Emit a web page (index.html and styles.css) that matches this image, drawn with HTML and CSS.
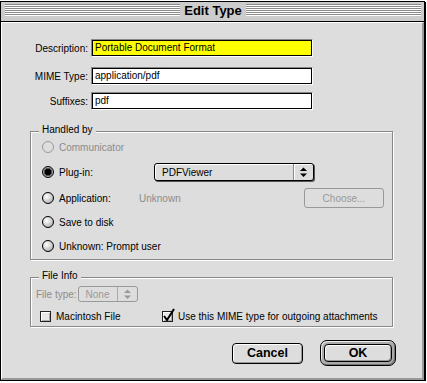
FILE: index.html
```html
<!DOCTYPE html>
<html>
<head>
<meta charset="utf-8">
<link rel="stylesheet" href="styles.css">
</head>
<body>
<div class="window">
  <div class="titlebar">
    <div class="stripes"></div>
    <div class="title">Edit Type</div>
    <div class="stripes"></div>
  </div>
  <div class="content">
    <div class="fields">
      <div class="frow"><span class="flabel">Description:</span><div class="field"><div class="field-in hl">Portable Document Format</div></div></div>
      <div class="frow r2"><span class="flabel">MIME Type:</span><div class="field"><div class="field-in">application/pdf</div></div></div>
      <div class="frow r3"><span class="flabel">Suffixes:</span><div class="field"><div class="field-in">pdf</div></div></div>
    </div>

    <div class="group handled">
      <span class="legend">Handled by</span>
      <div class="rrow"><span class="radio dis"></span><span class="rlabel dim">Communicator</span></div>
      <div class="rrow r2"><span class="radio on"></span><span class="rlabel w95">Plug-in:</span>
        <div class="popup"><span class="ptext">PDFViewer</span><span class="parrows"><svg width="7" height="11" viewBox="0 0 7 11"><polygon points="0,4 3.5,0.5 7,4" fill="#000"/><polygon points="0,6.5 3.5,10 7,6.5" fill="#000"/></svg></span></div>
      </div>
      <div class="rrow r3"><span class="radio"></span><span class="rlabel w80">Application:</span><span class="dim">Unknown</span><div class="btn-dis">Choose...</div></div>
      <div class="rrow r4"><span class="radio"></span><span class="rlabel">Save to disk</span></div>
      <div class="rrow r5"><span class="radio"></span><span class="rlabel">Unknown: Prompt user</span></div>
    </div>

    <div class="group fileinfo">
      <span class="legend">File Info</span>
      <div class="ftype"><span class="dim">File type:</span>
        <div class="popup dis"><span class="ptext">None</span><span class="parrows"><svg width="7" height="11" viewBox="0 0 7 11"><polygon points="0,4 3.5,0.5 7,4" fill="#999"/><polygon points="0,6.5 3.5,10 7,6.5" fill="#999"/></svg></span></div>
      </div>
      <div class="checks">
        <div class="check w122"><span class="cbox"></span><span>Macintosh File</span></div>
        <div class="check"><span class="cbox"><svg class="tick" width="14" height="16" viewBox="0 0 14 16"><polyline points="3,9 6,13 13,2" fill="none" stroke="#000" stroke-width="2"/></svg></span><span>Use this MIME type for outgoing attachments</span></div>
      </div>
    </div>

    <div class="buttons">
      <div class="btn cancel">Cancel</div>
      <div class="ring"><div class="btn ok">OK</div></div>
    </div>
  </div>
</div>
</body>
</html>
```
FILE: styles.css
```css
html, body { margin: 0; padding: 0; background: #fff; }
body {
  font-family: "Liberation Sans", Arial, sans-serif;
  font-size: 10px;
  color: #000;
}
.window {
  margin-top: 1px;
  width: 425px;
  height: 380px;
  box-sizing: border-box;
  border: 1px solid #000;
  box-shadow: 1px 1px 0 #000;
  background: #ddd;
  display: flex;
  flex-direction: column;
}
.titlebar {
  height: 20px;
  box-sizing: border-box;
  border-bottom: 1px solid #000;
  background: #ccc;
  display: flex;
  align-items: flex-start;
  padding: 2px 3px 0 4px;
}
.stripes {
  flex: 1;
  height: 12px;
  background: repeating-linear-gradient(to bottom, #8a8a8a 0 1px, #fff 1px 2px);
}
.title {
  padding: 0 4px;
  font-weight: bold;
  font-size: 13px;
  line-height: 16px;
  margin-top: -1px;
}
.content {
  flex: 1;
  border-style: solid;
  border-width: 1px 2px 2px 1px;
  border-color: #fff #999 #999 #fff;
}
.fields {
  padding-top: 16px;
  display: flex;
  flex-direction: column;
}
.frow { display: flex; align-items: center; }
.frow.r2 { margin-top: 10px; }
.frow.r3 { margin-top: 7px; }
.flabel { width: 86px; text-align: right; margin-right: 3px; }
.field {
  width: 222px;
  height: 18px;
  box-sizing: border-box;
  border: 1px solid;
  border-color: #888 #fff #fff #888;
}
.field-in {
  height: 100%;
  box-sizing: border-box;
  border: 1px solid #000;
  background: #fff;
  padding-left: 2px;
  line-height: 14px;
}
.field-in.hl { background: #ffff00; }

.group {
  position: relative;
  margin-left: 28px;
  width: 363px;
  box-sizing: border-box;
  border: 1px solid #888;
  box-shadow: inset 1px 1px 0 #fff, 1px 1px 0 #fff;
}
.legend {
  position: absolute;
  top: -8px;
  left: 8px;
  padding: 0 3px;
  background: #ddd;
  line-height: 12px;
}
.handled {
  margin-top: 21px;
  padding: 9px 8px 7px 11px;
}
.rrow { display: flex; align-items: center; height: 12px; }
.rrow.r2 { margin-top: 13px; }
.rrow.r3 { margin-top: 14px; }
.rrow.r4 { margin-top: 12px; }
.rrow.r5 { margin-top: 12px; }
.radio {
  flex: none;
  width: 12px;
  height: 12px;
  box-sizing: border-box;
  border-radius: 50%;
  border: 1px solid #000;
  background: radial-gradient(circle at 38% 35%, #fff 0, #e4e4e4 30%, #aaa 85%, #888 100%);
  margin-right: 5px;
}
.radio.on {
  background: radial-gradient(circle, #000 0 3px, #555 3.5px 4px, #aaa 4.5px);
}
.radio.dis {
  border-color: #9a9a9a;
  background: #dedede;
}
.dim { color: #8c8c8c; }
.w95 { width: 95px; flex: none; }
.w80 { width: 80px; flex: none; }
.popup {
  width: 160px;
  height: 18px;
  box-sizing: border-box;
  border: 1px solid #000;
  border-radius: 3px;
  background: #ddd;
  box-shadow: 1px 1px 0 #555, inset 1px 1px 0 #fff;
  display: flex;
  align-items: center;
}
.ptext { flex: 1; padding-left: 7px; }
.parrows {
  width: 20px;
  height: 100%;
  box-sizing: border-box;
  border-left: 1px solid #888;
  box-shadow: inset 1px 0 0 #fff;
  display: flex;
  align-items: center;
  justify-content: center;
}
.popup.dis {
  width: 60px;
  height: 16px;
  border-color: #999;
  box-shadow: none;
  color: #999;
  margin-left: 1px;
}
.popup.dis .parrows { border-left-color: #aaa; box-shadow: none; }
.btn-dis {
  margin-left: auto;
  width: 80px;
  height: 20px;
  box-sizing: border-box;
  border: 1px solid #999;
  border-radius: 3px;
  color: #999;
  display: flex;
  align-items: center;
  justify-content: center;
}
.fileinfo { margin-top: 17px; height: 50px; }
.ftype {
  margin: 8px 0 0 5px;
  height: 16px;
  display: flex;
  align-items: center;
}
.checks {
  margin: 9px 0 0 9px;
  height: 11px;
  display: flex;
  align-items: center;
}
.check { display: flex; align-items: center; }
.w122 { width: 122px; flex: none; }
.cbox {
  position: relative;
  width: 11px;
  height: 11px;
  box-sizing: border-box;
  border: 1px solid #222;
  background: #e8e8e8;
  box-shadow: inset 1px 1px 0 #fff, inset -1px -1px 0 #aaa;
  margin-right: 5px;
}
.tick { position: absolute; left: -2px; top: -5px; }
.buttons {
  margin-top: 13px;
  height: 26px;
  padding-right: 26px;
  display: flex;
  justify-content: flex-end;
  align-items: center;
  gap: 17px;
}
.btn {
  box-sizing: border-box;
  border: 1px solid #000;
  border-radius: 4px;
  background: #ddd;
  box-shadow: inset 1px 1px 0 #fff, inset -1px -1px 0 #999;
  font-weight: bold;
  font-size: 12.5px;
  display: flex;
  align-items: center;
  justify-content: center;
}
.cancel { width: 71px; height: 21px; }
.ring {
  width: 76px;
  height: 26px;
  box-sizing: border-box;
  border: 1px solid #000;
  border-radius: 7px;
  padding: 3px;
  background: #aaa;
  box-shadow: inset 1px 1px 0 #eee, inset -1px -1px 0 #777;
}
.ok { width: 100%; height: 100%; }
```
